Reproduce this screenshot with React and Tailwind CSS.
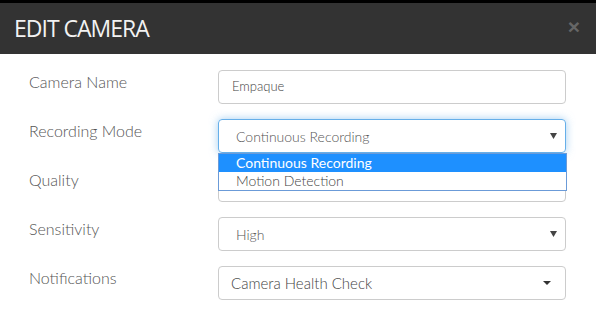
import React from "react";

function Caret({ className = "" }) {
  return (
    <svg width="7" height="6" viewBox="0 0 7 6" className={className}>
      <polygon points="0,0 7,0 3.5,6" fill="#444" />
    </svg>
  );
}

function Row({ label, children }) {
  return (
    <div className="flex items-start h-[34px]">
      <div className="w-[218px] pl-[29px] text-[16px] leading-[23px] font-light text-[#555]">{label}</div>
      <div className="w-[348px] h-[34px] relative">{children}</div>
    </div>
  );
}

export default function App() {
  return (
    <div className="w-[596px] h-[310px] bg-white overflow-hidden" style={{ fontFamily: "Lato, 'Open Sans', sans-serif" }}>
      <div className="h-[3px] bg-black" />
      <div className="h-[51px] bg-[#333333] flex items-center justify-between pl-[14px] pr-[16px]">
        <div className="text-[23px] text-[#f2f2f2] leading-none tracking-[-1px]" style={{ fontFamily: "'Open Sans', sans-serif" }}>EDIT CAMERA</div>
        <div className="text-[21px] font-bold text-[#666] leading-none -mt-[4px]" style={{ fontFamily: "'Liberation Sans', sans-serif" }}>×</div>
      </div>
      <div className="pt-[16px] flex flex-col gap-[15px]">
        <Row label="Camera Name">
          <div className="h-[34px] border border-[#ccc] rounded-[4px] flex items-center pl-[13px] text-[13px] font-light text-[#444]">Empaque</div>
        </Row>
        <Row label="Recording Mode">
          <div className="h-[34px] border border-[#66afe9] rounded-[4px] flex items-center pl-[17px] pr-[8px] text-[14px] font-light text-[#555] shadow-[0_0_8px_rgba(102,175,233,0.6)]">
            <span className="flex-1">Continuous Recording</span>
            <Caret />
          </div>
          <div className="absolute left-0 top-[34px] w-[349px] z-10 bg-white border border-[#6b9bd8] text-[14px] leading-[18px]">
            <div className="bg-[#1e90ff] text-white pl-[17px] h-[18px]">Continuous Recording</div>
            <div className="text-[#444] font-light pl-[17px] h-[18px]">Motion Detection</div>
          </div>
        </Row>
        <Row label="Quality">
          <div className="h-[34px] border border-[#ccc] rounded-[4px]" />
        </Row>
        <Row label="Sensitivity">
          <div className="h-[34px] border border-[#ccc] rounded-[4px] flex items-center pl-[17px] pr-[8px] text-[14px] font-light text-[#555]">
            <span className="flex-1">High</span>
            <Caret />
          </div>
        </Row>
        <Row label="Notifications">
          <div className="h-[34px] border border-[#ccc] rounded-[4px] flex items-center pl-[12px] pr-[14px] text-[15px] font-light text-[#444]">
            <span className="flex-1">Camera Health Check</span>
            <svg width="8" height="4" viewBox="0 0 8 4"><polygon points="0,0 8,0 4,4" fill="#333" /></svg>
          </div>
        </Row>
      </div>
    </div>
  );
}
